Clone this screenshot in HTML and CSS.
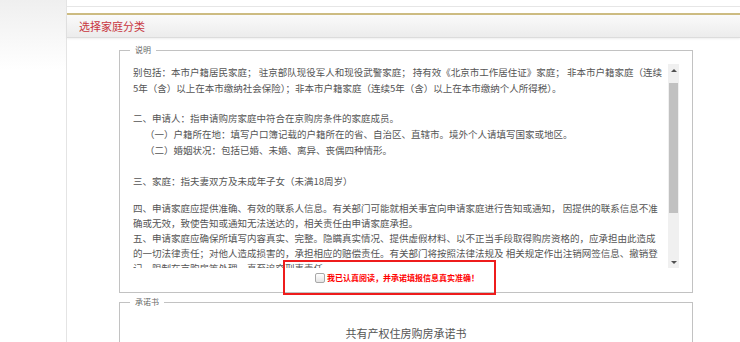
FILE: index.html
```html
<!DOCTYPE html>
<html lang="zh-CN">
<head>
  <meta charset="UTF-8" />
  <meta name="viewport" content="width=device-width, initial-scale=1" />
  <title>选择家庭分类</title>
  <link rel="stylesheet" href="styles.css">
</head>
<body>
  <div class="side"></div>
  <div class="main">
    <div class="topbar"></div>

    <div class="section">
      <div class="section-head">
        <h3>选择家庭分类</h3>
      </div>
      <div class="section-body">
        <fieldset class="box">
          <legend>说明</legend>
          <div class="notice">
            <div class="notice-text">
              <p>别包括：本市户籍居民家庭； 驻京部队现役军人和现役武警家庭； 持有效《北京市工作居住证》家庭； 非本市户籍家庭（连续<br>5年（含）以上在本市缴纳社会保险）；非本市户籍家庭（连续5年（含）以上在本市缴纳个人所得税）。</p>
              <p class="gap-a">二、申请人：指申请购房家庭中符合在京购房条件的家庭成员。<br>
                <span class="sub">（一）户籍所在地：填写户口簿记载的户籍所在的省、自治区、直辖市。境外个人请填写国家或地区。</span><br>
                <span class="sub">（二）婚姻状况：包括已婚、未婚、离异、丧偶四种情形。</span></p>
              <p class="gap-b">三、家庭：指夫妻双方及未成年子女（未满18周岁）</p>
              <p class="gap-c tight">四、申请家庭应提供准确、有效的联系人信息。有关部门可能就相关事宜向申请家庭进行告知或通知， 因提供的联系信息不准<br>确或无效，致使告知或通知无法送达的，相关责任由申请家庭承担。<br>五、申请家庭应确保所填写内容真实、完整。隐瞒真实情况、提供虚假材料、以不正当手段取得购房资格的，应承担由此造成<br>的一切法律责任；对他人造成损害的，承担相应的赔偿责任。有关部门将按照法律法规及 相关规定作出注销网签信息、撤销登<br>记、限制在京购房等处理，直至追究刑事责任。</p>
            </div>
            <div class="scrollbar">
              <div class="sb-btn"><span class="arrow-up"></span></div>
              <div class="sb-thumb"></div>
              <div class="sb-fill"></div>
              <div class="sb-btn"><span class="arrow-down"></span></div>
            </div>
          </div>
          <label class="agree">
            <input type="checkbox" class="check">
            <span>我已认真阅读，并承诺填报信息真实准确！</span>
          </label>
        </fieldset>

        <fieldset class="box pledge">
          <legend>承诺书</legend>
          <div class="pledge-title">共有产权住房购房承诺书</div>
        </fieldset>
      </div>
    </div>
  </div>
</body>
</html>
```

FILE: styles.css
```css
* {
  box-sizing: border-box;
}
body {
  margin: 0;
  display: flex;
  min-height: 100vh;
  font-family: "Noto Sans CJK SC", "Noto Sans", sans-serif;
  background: linear-gradient(to bottom, #efefef 0, #fff 70px);
  overflow: hidden;
}
.side {
  width: 66px;
  flex: none;
}
.main {
  flex: 1;
  background: #fff;
  border-left: 1px solid #e4e4e4;
}
.topbar {
  height: 7px;
  border-bottom: 1px solid #e6e6e6;
}
.section {
  margin-top: 6px;
  border-top: 2px solid #cdbc82;
}
.section-head {
  height: 23px;
  background: linear-gradient(to bottom, #fafafa, #ececec);
  border-bottom: 1px solid #dcdcdc;
  box-shadow: 0 1px 2px rgba(0,0,0,0.07);
  padding-left: 12px;
  display: flex;
  align-items: center;
}
.section-head h3 {
  margin: 0;
  font-size: 11px;
  font-weight: normal;
  color: #c8363e;
}
.section-body {
  padding: 6px 47px 40px 52px;
}
.box {
  margin: 0;
  padding: 8px 13px 0 13px;
  border: 1px solid #c2c2c2;
  min-width: 0;
}
.box legend {
  margin-left: -3px;
  padding: 0 5px;
  font-size: 8px;
  line-height: 12px;
  color: #666;
}
.notice {
  display: flex;
  height: 204px;
}
.notice-text {
  flex: 1;
  overflow: hidden;
  font-size: 9.5px;
  line-height: 16px;
  color: #555;
  white-space: nowrap;
}
.notice-text p {
  margin: 0;
}
.notice-text .gap-a {
  margin-top: 14px;
}
.notice-text .gap-b {
  margin-top: 15px;
}
.notice-text .gap-c {
  margin-top: 12px;
}
.notice-text .tight {
  line-height: 15px;
}
.sub {
  padding-left: 12px;
}
.scrollbar {
  width: 11px;
  margin-left: 1px;
  background: #f0f0f0;
  display: flex;
  flex-direction: column;
}
.sb-btn {
  height: 12px;
  display: flex;
  align-items: center;
  justify-content: center;
}
.arrow-up {
  border-left: 3px solid transparent;
  border-right: 3px solid transparent;
  border-bottom: 3px solid #505050;
}
.arrow-down {
  border-left: 3px solid transparent;
  border-right: 3px solid transparent;
  border-top: 3px solid #505050;
}
.sb-thumb {
  height: 130px;
  margin: 7px 1px 0;
  background: #c1c1c1;
}
.sb-fill {
  flex: 1;
}
.agree {
  display: flex;
  align-items: center;
  width: 213px;
  height: 35px;
  margin: -8px 0 -3px 150px;
  padding-left: 30px;
  border: 2px solid #ee1c1c;
  position: relative;
  font-size: 8px;
  font-weight: bold;
  color: #f00;
}
.check {
  appearance: none;
  -webkit-appearance: none;
  width: 10px;
  height: 10px;
  margin: 0 2px 0 0;
  border: 1px solid #a8a8a8;
  border-radius: 2px;
  background: linear-gradient(to bottom, #fff, #e4e4e4);
}
.pledge {
  margin-top: 3px;
  padding-top: 17px;
  padding-bottom: 40px;
}
.pledge-title {
  text-align: center;
  font-size: 11px;
  line-height: 16px;
  color: #555;
}
```
